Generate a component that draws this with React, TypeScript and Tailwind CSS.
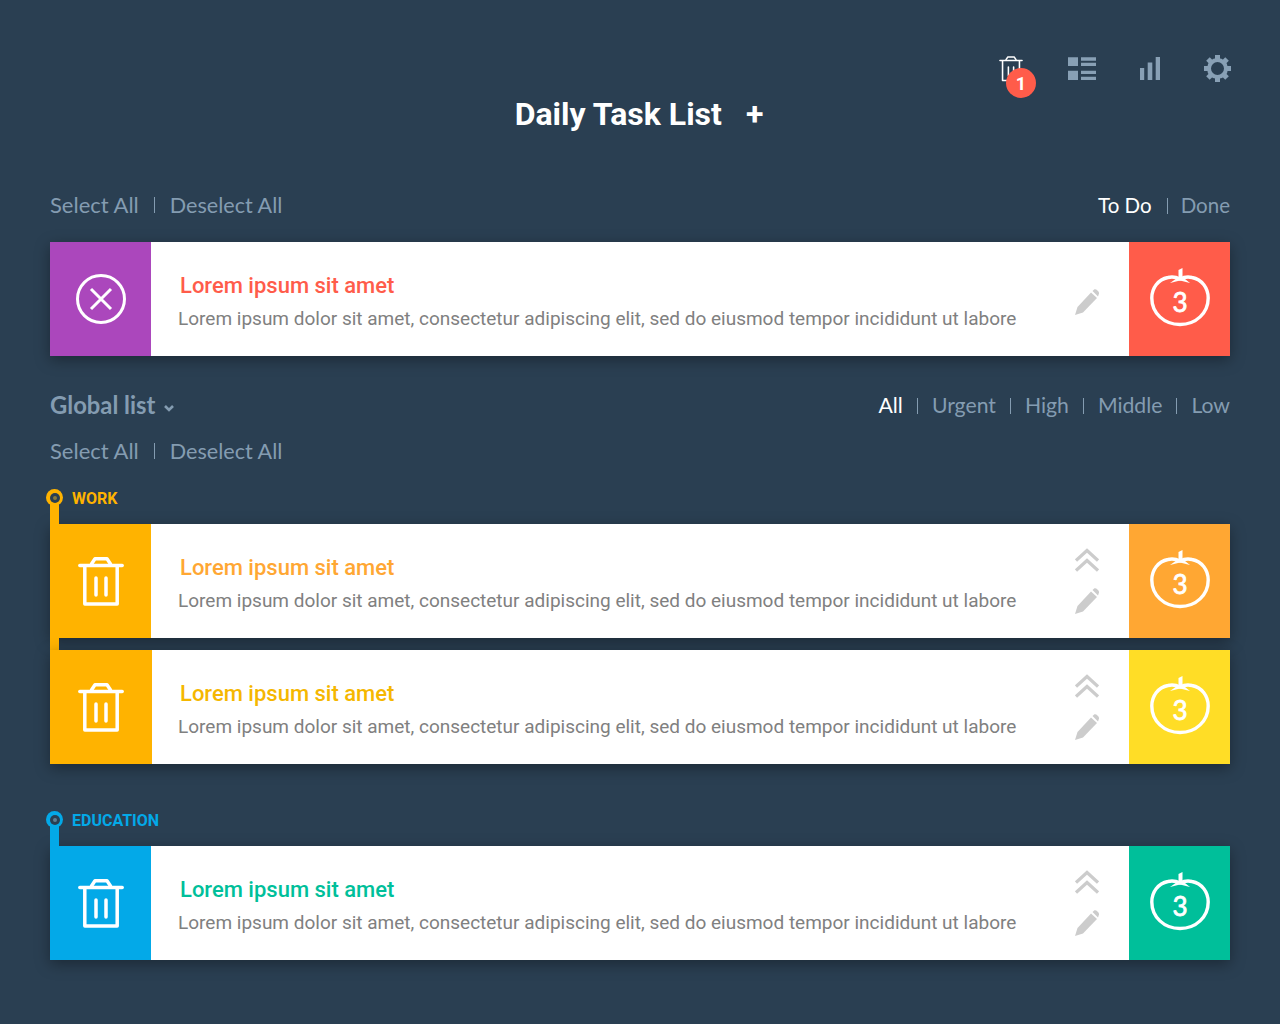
import type { ReactNode } from "react";

const LABEL = "font-['Lato','Noto_Sans',sans-serif]";
const DESC = "Lorem ipsum dolor sit amet, consectetur adipiscing elit, sed do eiusmod tempor incididunt ut labore";
const GEAR_TEETH = [0, 45, 90, 135, 180, 225, 270, 315];

function TrashIcon({ className, sw = 3.5 }: { className?: string; sw?: number }) {
  return (
    <svg viewBox="0 0 46 50" className={className} fill="none" stroke="currentColor" strokeWidth={sw} strokeLinejoin="round" strokeLinecap="round">
      <path d="M1.800 9.500H44.200" />
      <path d="M6.800 10V48H39.200V10" />
      <path d="M13.500 8L17 2.800H29L32.500 8" />
      <path d="M18 22V39M28 22V39" />
    </svg>
  );
}

function CloseCircle() {
  return (
    <svg viewBox="0 0 50 50" className="h-[50px] w-[50px]" fill="none" stroke="white" strokeWidth="3">
      <circle cx="25" cy="25" r="23.500" />
      <path d="M15 15L35 35M35 15L15 35" />
    </svg>
  );
}

function Tomato() {
  return (
    <svg viewBox="0 0 60 60" className="-mt-[2px] h-[60px] w-[60px]">
      <path d="M30 11C26 9 22 8.500 18 9.500C8 11.500 1.800 20 1.800 30C1.800 45 14 56.500 30 56.500C46 56.500 58.200 45 58.200 30C58.200 20 52 11.500 42 9.500C38 8.500 34 9 30 11Z" fill="none" stroke="white" strokeWidth="3.400" />
      <path d="M28.500 2L32.500 0V9L40 15L30 12.500L20 15L28.500 9Z" fill="white" />
      <text x="30" y="43.500" textAnchor="middle" fill="white" stroke="white" strokeWidth="0.800" fontSize="26" fontFamily="Lato, sans-serif">3</text>
    </svg>
  );
}

function Pencil() {
  return (
    <svg viewBox="0 0 24 26" className="h-[26px] w-[24px]" fill="#cccccc">
      <path d="M0 26L2.500 18L16 3.500L22 9L8 23.500L0 26Z" />
      <path d="M17.500 2L19.500 0.300C21 -0.500 24.500 2.500 24 4.500L23 7.500Z" />
    </svg>
  );
}

function Chevrons() {
  return (
    <svg viewBox="0 0 24 24" className="h-6 w-6" fill="none" stroke="#cccccc" strokeWidth="3.200">
      <path d="M1 12.500L12 2.500L23 12.500" />
      <path d="M1 22.500L12 12.500L23 22.500" />
    </svg>
  );
}

function Gear() {
  return (
    <svg viewBox="0 0 27 27" className="h-[27px] w-[27px]" fill="#88a0b5">
      <circle cx="13.500" cy="13.500" r="8.500" fill="none" stroke="#88a0b5" strokeWidth="4" />
      {GEAR_TEETH.map((a) => (
        <rect key={a} x="11" y="0" width="5" height="5" transform={`rotate(${a} 13.5 13.5)`} />
      ))}
    </svg>
  );
}

function Card({ left, side, titleColor, icon, arrows = true, leftClass = "w-[101px]" }: {
  left: string; side: string; titleColor: string; icon: ReactNode; arrows?: boolean; leftClass?: string;
}) {
  return (
    <div className="flex h-[114px] bg-white shadow-[0_4px_14px_rgba(0,0,0,0.35)]">
      <div className={`flex shrink-0 items-center justify-center ${left} ${leftClass}`}>{icon}</div>
      <div className="flex min-w-0 flex-1 items-center justify-between pl-[27px] pr-[30px]">
        <div className="pt-[6px]">
          <div className={`pl-[2px] text-[22px] leading-[30px] font-medium ${titleColor}`}>Lorem ipsum sit amet</div>
          <div className="mt-[4px] text-[19px] leading-[28px] text-[#808080]">{DESC}</div>
        </div>
        <div className={`flex flex-col items-center gap-[16px] ${arrows ? "" : "pt-[5px]"}`}>
          {arrows && <Chevrons />}
          <Pencil />
        </div>
      </div>
      <div className={`flex w-[101px] shrink-0 items-center justify-center ${side}`}><Tomato /></div>
    </div>
  );
}

function Sep({ className = "mx-[15px]" }: { className?: string }) {
  return <span className={`h-[16px] w-px self-center bg-[#849cb1] ${className}`} />;
}

function SelectRow({ className }: { className?: string }) {
  return (
    <div className={`flex items-baseline text-[22px] leading-[32px] text-[#849cb1] ${LABEL} ${className ?? ""}`}>
      <span>Select All</span>
      <Sep />
      <span className="text-[21.600px]">Deselect All</span>
    </div>
  );
}

function GroupLabel({ text, color, ring, core }: { text: string; color: string; ring: string; core: string }) {
  return (
    <div className="flex h-[35px] items-start">
      <div className="relative h-full w-[9px] shrink-0">
        <div className={`absolute -left-[4px] top-0 flex h-[17px] w-[17px] items-center justify-center rounded-full ${ring}`}>
          <div className="flex h-[10px] w-[10px] items-center justify-center rounded-full bg-[#2a3f52]">
            <div className={`h-[4px] w-[4px] rounded-full ${core}`} />
          </div>
        </div>
        <div className={`absolute inset-x-0 top-[14px] bottom-0 ${ring}`} />
      </div>
      <span className={`ml-[13px] pt-[1px] text-[16px] leading-[17px] font-bold ${color}`}>{text}</span>
    </div>
  );
}

export default function App() {
  return (
    <div className="h-[1024px] w-[1280px] overflow-hidden bg-[#2a3f52] px-[50px] font-['Roboto',sans-serif]">
      <header className="relative h-[187px]">
        <h1 className="flex justify-center pt-[93px] pr-[2px] text-[32px] leading-[42px] font-bold text-white">
          <span>Daily Task List</span>
          <span className="ml-[24px]">+</span>
        </h1>
        <div className="absolute -right-px top-[55px] flex items-center gap-[44px]">
          <div className="relative mr-px h-[27px] w-[24px] text-white">
            <TrashIcon className="h-[27px] w-[24px]" sw={3} />
            <span className="absolute left-[7px] top-[13px] flex h-[30px] w-[30px] items-center justify-center rounded-full bg-[#ff5c4a] text-[18px] font-bold text-white">1</span>
          </div>
          <svg viewBox="0 0 28 23" className="h-[23px] w-[28px]" fill="#88a0b5">
            <path d="M0 0.300H10V9H0ZM0 13.700H10V23H0ZM13 0.300H28V3.700H13ZM13 5.700H28V9H13ZM13 13.700H28V17H13ZM13 19.700H28V23H13Z" />
          </svg>
          <svg viewBox="0 0 20 23" className="h-[23px] w-[20px]" fill="#88a0b5">
            <path d="M0 11H4.200V23H0ZM7.700 5.500H12.300V23H7.700ZM15.700 0H20V23H15.700Z" />
          </svg>
          <Gear />
        </div>
      </header>

      <div className="flex h-[55px] items-start justify-between pt-[2px]">
        <SelectRow />
        <div className={`flex items-center text-[20.500px] leading-[33px] text-[#849cb1] ${LABEL}`}>
          <span className="text-white">To Do</span>
          <Sep className="ml-[15px] mr-[13px]" />
          <span>Done</span>
        </div>
      </div>

      <Card left="bg-[#ab47bc]" side="bg-[#ff5c4a]" titleColor="text-[#ff5c4a]" icon={<CloseCircle />} arrows={false} />

      <div className="mt-[33px] flex h-[32px] items-center justify-between">
        <div className={`flex items-center text-[23.800px] leading-[30px] font-bold text-[#849cb1] ${LABEL}`}>
          <span>Global list</span>
          <svg viewBox="0 0 10 7" className="ml-[9px] mt-[6px] h-[7px] w-[10px]" fill="none" stroke="#849cb1" strokeWidth="2.600">
            <path d="M1 1L5 5L9 1" />
          </svg>
        </div>
        <div className={`flex items-center pt-[2px] text-[21.200px] text-[#849cb1] ${LABEL}`}>
          <span className="text-white">All</span>
          <Sep className="mx-[14px]" />
          <span>Urgent</span>
          <Sep className="mx-[14px]" />
          <span>High</span>
          <Sep className="mx-[14px]" />
          <span>Middle</span>
          <Sep className="mx-[14px]" />
          <span>Low</span>
        </div>
      </div>

      <SelectRow className="mt-[14px] h-[32px]" />

      <div className="mt-[22px]">
        <GroupLabel text="WORK" color="text-[#ffb300]" ring="bg-[#ffb300]" core="bg-[#8a7a3a]" />
        <Card left="bg-[#ffb300]" side="bg-[#ffa733]" titleColor="text-[#ffa733]" icon={<TrashIcon className="h-[50px] w-[46px] text-white" />} />
        <div className="h-[12px] w-[9px] bg-[#ffb300]" />
        <Card left="bg-[#ffb300]" leftClass="relative -mr-px w-[102px]" side="bg-[#ffdd26]" titleColor="text-[#f5b700]" icon={<TrashIcon className="h-[50px] w-[46px] text-white" />} />
      </div>

      <div className="mt-[47px]">
        <GroupLabel text="EDUCATION" color="text-[#03a9e8]" ring="bg-[#03a9e8]" core="bg-[#5f7f93]" />
        <Card left="bg-[#03a9e8]" side="bg-[#00bf9a]" titleColor="text-[#00bf9a]" icon={<TrashIcon className="h-[50px] w-[46px] text-white" />} />
      </div>
    </div>
  );
}
